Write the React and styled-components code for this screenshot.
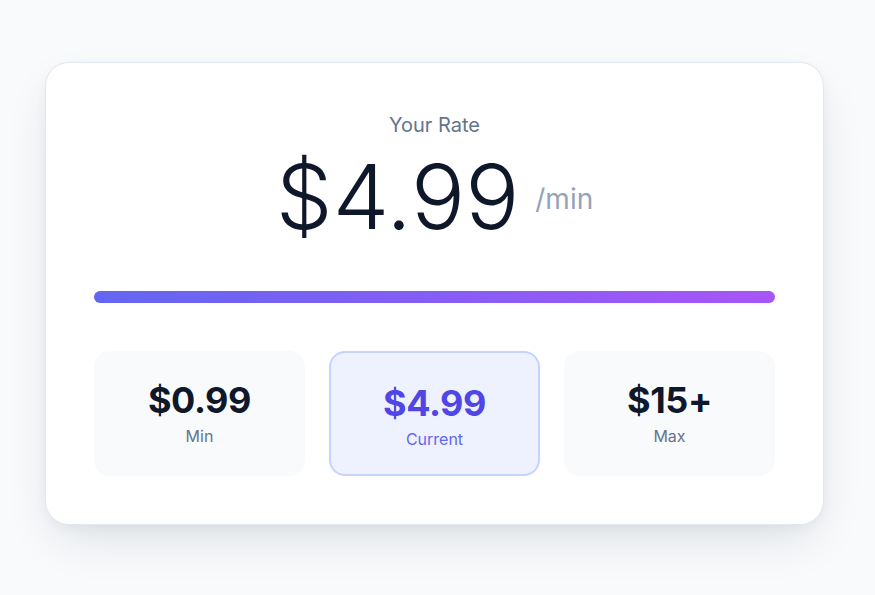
import React from "react";
import styled, { createGlobalStyle } from "styled-components";

const Global = createGlobalStyle`
  * { box-sizing: border-box; }
  html, body { margin: 0; padding: 0; }
  body {
    background: #f8fafc;
    font-family: Inter, "Noto Sans", sans-serif;
    -webkit-font-smoothing: antialiased;
  }
`;

const Page = styled.div`
  min-height: 595px;
  display: flex;
  align-items: center;
  justify-content: center;
  padding-bottom: 8px;
  padding-right: 6px;
`;

const Card = styled.div`
  width: 779px;
  background: #ffffff;
  border: 1px solid #e2e8f0;
  border-radius: 24px;
  padding: 48px;
  box-shadow: 0 20px 50px -10px rgba(15, 23, 42, 0.12), 0 4px 12px rgba(15, 23, 42, 0.04);
  display: flex;
  flex-direction: column;
`;

const Label = styled.div`
  text-align: center;
  font-size: 20px;
  line-height: 28px;
  color: #64748b;
`;

const PriceRow = styled.div`
  margin-top: 13px;
  display: flex;
  align-items: center;
  justify-content: center;
  gap: 16px;
`;

const BigPrice = styled.span`
  font-size: 90px;
  line-height: 1;
  font-weight: 300;
  color: #0f172a;
`;

const Unit = styled.span`
  font-size: 28px;
  line-height: 32px;
  color: #94a3b8;
  margin-top: 4px;
`;

const Bar = styled.div`
  margin-top: 49px;
  height: 12px;
  border-radius: 9999px;
  background: linear-gradient(90deg, #6366f1, #a855f7);
`;

const Tiers = styled.div`
  margin-top: 48px;
  display: grid;
  grid-template-columns: repeat(3, 1fr);
  gap: 24px;
`;

const Tier = styled.div`
  border-radius: 16px;
  background: ${(p) => (p.$active ? "#eef2ff" : "#f8fafc")};
  border: 2px solid ${(p) => (p.$active ? "#c7d2fe" : "transparent")};
  padding: ${(p) => (p.$active ? "30px 16px 23px" : "27px 16px 26px")};
  text-align: center;
`;

const TierPrice = styled.div`
  font-size: 36px;
  line-height: 40px;
  font-weight: 700;
  letter-spacing: -0.4px;
  color: ${(p) => (p.$active ? "#4f46e5" : "#0f172a")};
`;

const TierLabel = styled.div`
  margin-top: 4px;
  font-size: 16px;
  line-height: 24px;
  color: ${(p) => (p.$active ? "#6366f1" : "#64748b")};
`;

const tiers = [
  { price: "$0.99", label: "Min" },
  { price: "$4.99", label: "Current", active: true },
  { price: "$15+", label: "Max" },
];

export default function App() {
  return (
    <>
      <Global />
      <Page>
        <Card>
          <Label>Your Rate</Label>
          <PriceRow>
            <BigPrice>$4.99</BigPrice>
            <Unit>/min</Unit>
          </PriceRow>
          <Bar />
          <Tiers>
            {tiers.map((t) => (
              <Tier key={t.label} $active={t.active}>
                <TierPrice $active={t.active}>{t.price}</TierPrice>
                <TierLabel $active={t.active}>{t.label}</TierLabel>
              </Tier>
            ))}
          </Tiers>
        </Card>
      </Page>
    </>
  );
}
